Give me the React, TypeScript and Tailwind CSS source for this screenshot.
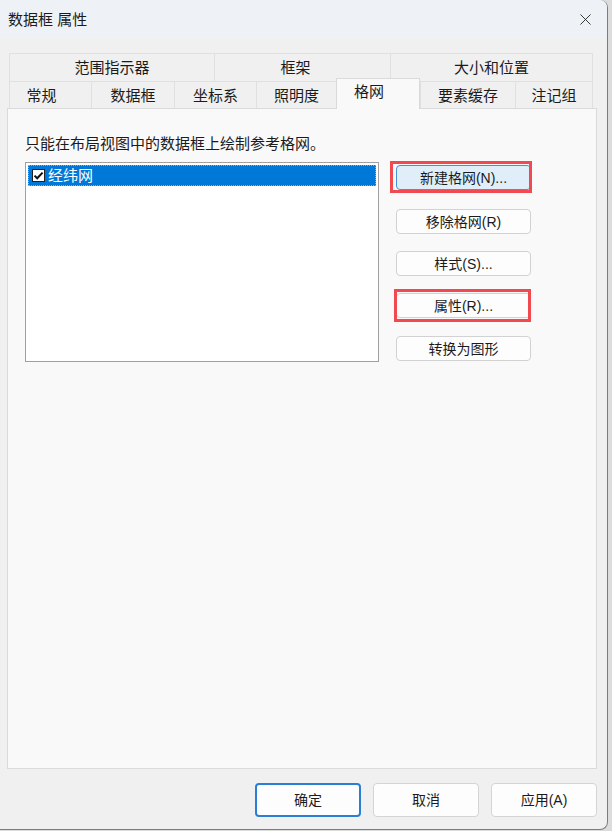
import { X } from 'lucide-react';

const FONT = '"Liberation Sans", "Noto Sans CJK SC", sans-serif';

// 上排标签（宽度按截图量取）
const TOP_TABS = [
  { label: '范围指示器', w: 'w-[205px]', pad: '' },
  { label: '框架', w: 'w-[176px]', pad: 'pr-[14px]' },
  { label: '大小和位置', w: 'w-[203px]', pad: '' },
];

const BOTTOM_TABS = [
  { label: '常规', w: 'w-[82px]', pad: 'pr-[18px]', active: false },
  { label: '数据框', w: 'w-[83px]', pad: '', active: false },
  { label: '坐标系', w: 'w-[82px]', pad: '', active: false },
  { label: '照明度', w: 'w-[80px]', pad: '', active: false },
  { label: '格网', w: 'w-[84px]', pad: 'pr-[18px]', active: true },
  { label: '要素缓存', w: 'w-[95px]', pad: '', active: false },
  { label: '注记组', w: 'w-[78px]', pad: '', active: false },
];

function SideButton({
  label,
  mark,
  hot,
  className = '',
}: {
  label: string;
  mark?: string;
  hot?: boolean;
  className?: string;
}) {
  return (
    <div className={`relative ${className}`}>
      <button
        type="button"
        className={`w-[135px] h-[25px] rounded-[4px] border text-[14px] leading-none text-[#1b1b1b] flex items-center justify-center ${
          hot ? 'bg-[#e0eef9] border-[#4a90d9]' : 'bg-[#fdfdfd] border-[#d2d2d2]'
        }`}
      >
        {label}
      </button>
      {mark && <span className={`absolute border-[3px] border-[#f04a50] pointer-events-none ${mark}`} />}
    </div>
  );
}

function FooterButton({ label, primary }: { label: string; primary?: boolean }) {
  return (
    <button
      type="button"
      className={`w-[106px] h-[34px] rounded-[4px] bg-[#fdfdfd] text-[14px] text-[#1b1b1b] flex items-center justify-center ${
        primary ? 'border-2 border-[#2a7fd4]' : 'border border-[#d4d4d4]'
      }`}
    >
      {label}
    </button>
  );
}

export default function App() {
  return (
    <div className="w-[612px] h-[831px] bg-[#dcdcdc] overflow-hidden" style={{ fontFamily: FONT }}>
      <div className="w-[608px] h-[830px] bg-[#f0f0f0] border-r border-b border-[#7c7c7c] rounded-tr-[8px] rounded-br-[8px] flex flex-col">
        {/* 标题栏 */}
        <div className="h-[38px] shrink-0 bg-[#eef2f6] rounded-tr-[8px] flex items-center justify-between pl-[8px] pr-[12px]">
          <span className="text-[15px] leading-none text-[#1b1b1b]">数据框 属性</span>
          <X size={19} strokeWidth={1.1} className="text-[#1b1b1b]" />
        </div>

        {/* 标签 */}
        <div className="mt-[15px] ml-[9px] w-[584px] flex flex-col">
          <div className="flex h-[28px]">
            {TOP_TABS.map((t) => (
              <div
                key={t.label}
                className={`${t.w} ${t.pad} h-full border-t border-l border-[#e0e0e0] last:border-r flex items-center justify-center text-[15px] leading-none text-[#1b1b1b]`}
              >
                {t.label}
              </div>
            ))}
          </div>
          <div className="flex h-[27px] items-end">
            {BOTTOM_TABS.map((t) =>
              t.active ? (
                <div
                  key={t.label}
                  className={`${t.w} ${t.pad} relative z-10 h-[31px] -mb-[1px] bg-[#f9f9f9] border-t border-x border-[#dadada] flex items-start justify-center pt-[5px] text-[15px] leading-none text-[#1b1b1b]`}
                >
                  {t.label}
                </div>
              ) : (
                <div
                  key={t.label}
                  className={`${t.w} ${t.pad} h-full border-t border-l border-[#e0e0e0] last:border-r flex items-center justify-center text-[15px] leading-none text-[#1b1b1b]`}
                >
                  {t.label}
                </div>
              ),
            )}
          </div>
        </div>

        {/* 内容面板 */}
        <div className="ml-[7px] w-[590px] h-[661px] bg-[#f9f9f9] border border-[#dadada] flex flex-col pl-[17px] pt-[27px]">
          <p className="text-[15px] leading-[15px] text-[#1b1b1b]">只能在布局视图中的数据框上绘制参考格网。</p>

          <div className="mt-[11px] flex items-start">
            <div className="w-[354px] h-[200px] bg-white border border-[#a0a0a0] p-[2px]">
              <div className="h-[21px] bg-[#0078d7] border border-dotted border-[#e59a4a] flex items-center pl-[3px] gap-[3px]">
                <span className="w-[13px] h-[13px] bg-white border border-[#222] flex items-center justify-center">
                  <svg width="11" height="11" viewBox="0 0 11 11">
                    <path d="M1.5 5.6 L4.2 8.3 L9.6 2.6" fill="none" stroke="#111" strokeWidth="2" />
                  </svg>
                </span>
                <span className="text-[15px] leading-none text-white">经纬网</span>
              </div>
            </div>

            <div className="ml-[17px] mt-[3px] flex flex-col">
              <SideButton label="新建格网(N)..." hot mark="-left-[6px] -right-[1px] -top-[4px] -bottom-[3px]" />
              <SideButton label="移除格网(R)" className="mt-[19px]" />
              <SideButton label="样式(S)..." className="mt-[17px]" />
              <SideButton label="属性(R)..." className="mt-[17px]" mark="-left-[2px] right-0 -top-[4px] -bottom-[4px]" />
              <SideButton label="转换为图形" className="mt-[18px]" />
            </div>
          </div>
        </div>

        {/* 底部按钮 */}
        <div className="mt-[14px] flex justify-end gap-[12px] pr-[10px]">
          <FooterButton label="确定" primary />
          <FooterButton label="取消" />
          <FooterButton label="应用(A)" />
        </div>
      </div>
    </div>
  );
}
